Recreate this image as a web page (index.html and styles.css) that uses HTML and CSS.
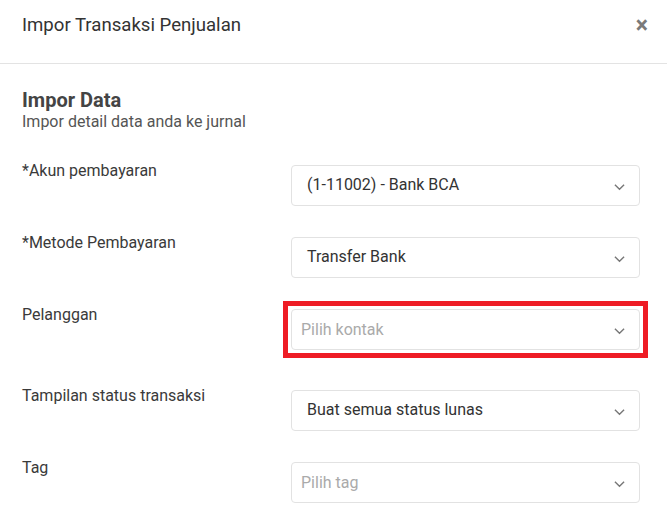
FILE: index.html
```html
<!DOCTYPE html>
<html lang="id">
<head>
    <meta charset="UTF-8">
    <meta name="viewport" content="width=device-width, initial-scale=1.0">
    <title>Impor Transaksi Penjualan</title>
    <link rel="stylesheet" href="styles.css">
</head>
<body>

    <div class="modal">
        <div class="modal-header">
            <h1 class="modal-title">Impor Transaksi Penjualan</h1>
            <span class="close">&times;</span>
        </div>

        <div class="modal-body">
            <h2 class="section-title">Impor Data</h2>
            <p class="section-sub">Impor detail data anda ke jurnal</p>

            <div class="form-grid">
                <label class="field-label">*Akun pembayaran</label>
                <div class="select">
                    <span class="select-value">(1-11002) - Bank BCA</span>
                    <svg class="chevron" viewBox="0 0 12 8"><path d="M1 1.5l5 5 5-5"/></svg>
                </div>

                <label class="field-label">*Metode Pembayaran</label>
                <div class="select">
                    <span class="select-value">Transfer Bank</span>
                    <svg class="chevron" viewBox="0 0 12 8"><path d="M1 1.5l5 5 5-5"/></svg>
                </div>

                <label class="field-label">Pelanggan</label>
                <div class="highlight-frame">
                    <div class="select">
                        <span class="select-placeholder">Pilih kontak</span>
                        <svg class="chevron" viewBox="0 0 12 8"><path d="M1 1.5l5 5 5-5"/></svg>
                    </div>
                </div>

                <label class="field-label">Tampilan status transaksi</label>
                <div class="select">
                    <span class="select-value">Buat semua status lunas</span>
                    <svg class="chevron" viewBox="0 0 12 8"><path d="M1 1.5l5 5 5-5"/></svg>
                </div>

                <label class="field-label">Tag</label>
                <div class="select">
                    <span class="select-placeholder">Pilih tag</span>
                    <svg class="chevron" viewBox="0 0 12 8"><path d="M1 1.5l5 5 5-5"/></svg>
                </div>
            </div>
        </div>
    </div>

</body>
</html>
```

FILE: styles.css
```css
body {
    margin: 0;
    font-family: Roboto, "Liberation Sans", Arial, sans-serif;
    background-color: #fff;
    color: #333;
}

.modal {
    width: 667px;
    overflow: hidden;
}

/* Header */
.modal-header {
    display: flex;
    align-items: center;
    justify-content: space-between;
    height: 49px;
    padding: 0 19px 14px 22px;
    border-bottom: 1px solid #e3e3e3;
}
.modal-title {
    margin: 0;
    font-size: 18.6px;
    font-weight: 400;
    color: #333;
    line-height: 22px;
}
.close {
    font-size: 23px;
    font-weight: bold;
    color: #7a7a7a;
    line-height: 20px;
    margin-top: 2px;
}

/* Body */
.modal-body {
    padding: 24px 27px 20px 22px;
}
.section-title {
    margin: 0;
    font-size: 20px;
    font-weight: 700;
    line-height: 24px;
    color: #444;
}
.section-sub {
    margin: 0;
    font-size: 16px;
    line-height: 20px;
    color: #555;
}

.form-grid {
    display: grid;
    grid-template-columns: 269px 1fr;
    row-gap: 31px;
    margin-top: 33px;
}
.field-label {
    font-size: 16px;
    line-height: 20px;
    margin-top: -4px;
    color: #3a3a3a;
}

.select {
    display: flex;
    align-items: center;
    justify-content: space-between;
    height: 41px;
    box-sizing: border-box;
    border: 1px solid #e2e2e2;
    border-radius: 4px;
    padding: 0 14px 0 15px;
    background: #fff;
}
.select-value {
    font-size: 16px;
    color: #333;
    margin-top: -2px;
}
.select-placeholder {
    font-size: 16px;
    color: #aaa;
    margin-left: -6px;
}
.chevron {
    width: 11px;
    height: 8px;
    margin-top: 2px;
    fill: none;
    stroke: #777;
    stroke-width: 1.5;
}

/* red annotation frame around the Pelanggan field */
.highlight-frame {
    border: 5px solid #ee1c25;
    padding: 3px;
    margin: -8px -8px 1px;
}
```
